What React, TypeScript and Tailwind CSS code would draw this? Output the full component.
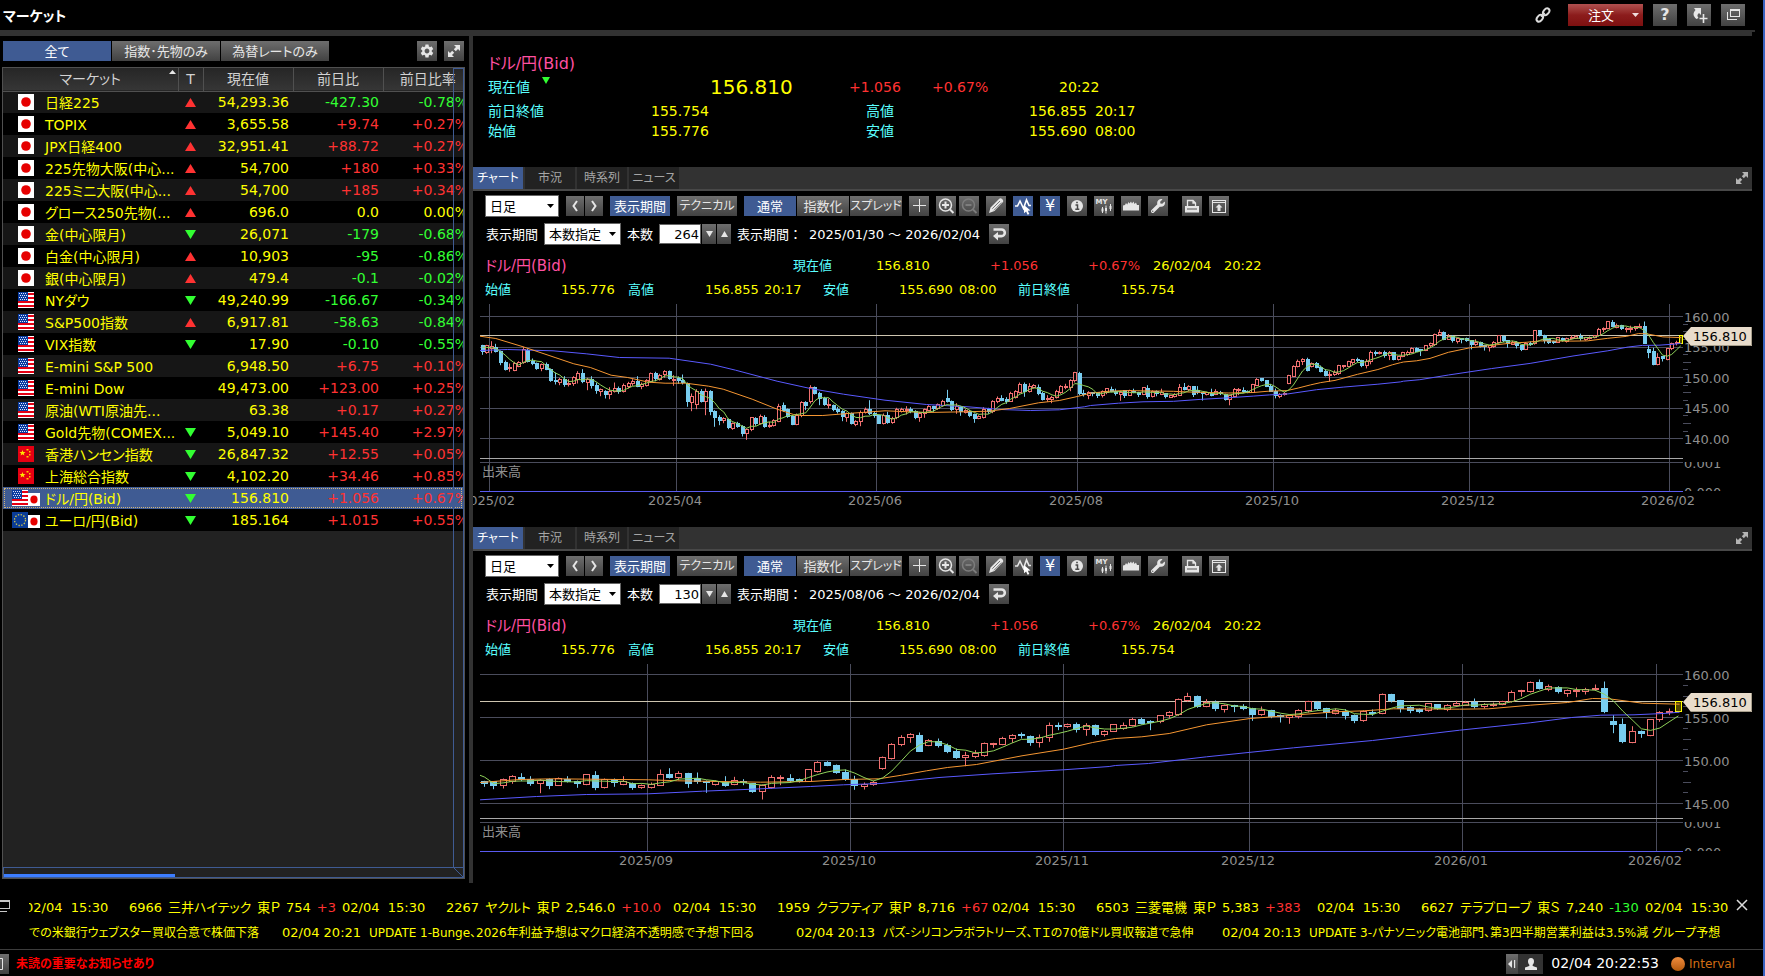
import React from "react";
import { FaWrench } from "react-icons/fa";
import { MdSettings } from "react-icons/md";

/* ---------- market list ---------- */

type Flag = "jp" | "us" | "cn" | "eu";
type Market = [Flag[], string, "u" | "d" | "", string, string, string];

const MARKETS: Market[] = [
  [["jp"], "日経225", "u", "54,293.36", "-427.30", "-0.78%"],
  [["jp"], "TOPIX", "u", "3,655.58", "+9.74", "+0.27%"],
  [["jp"], "JPX日経400", "u", "32,951.41", "+88.72", "+0.27%"],
  [["jp"], "225先物大阪(中心...", "u", "54,700", "+180", "+0.33%"],
  [["jp"], "225ミニ大阪(中心...", "u", "54,700", "+185", "+0.34%"],
  [["jp"], "グロース250先物(...", "u", "696.0", "0.0", "0.00%"],
  [["jp"], "金(中心限月)", "d", "26,071", "-179", "-0.68%"],
  [["jp"], "白金(中心限月)", "u", "10,903", "-95", "-0.86%"],
  [["jp"], "銀(中心限月)", "u", "479.4", "-0.1", "-0.02%"],
  [["us"], "NYダウ", "d", "49,240.99", "-166.67", "-0.34%"],
  [["us"], "S&P500指数", "u", "6,917.81", "-58.63", "-0.84%"],
  [["us"], "VIX指数", "d", "17.90", "-0.10", "-0.55%"],
  [["us"], "E-mini S&P 500", "", "6,948.50", "+6.75", "+0.10%"],
  [["us"], "E-mini Dow", "", "49,473.00", "+123.00", "+0.25%"],
  [["us"], "原油(WTI原油先...", "", "63.38", "+0.17", "+0.27%"],
  [["us"], "Gold先物(COMEX...", "d", "5,049.10", "+145.40", "+2.97%"],
  [["cn"], "香港ハンセン指数", "d", "26,847.32", "+12.55", "+0.05%"],
  [["cn"], "上海総合指数", "d", "4,102.20", "+34.46", "+0.85%"],
  [["us", "jp"], "ドル/円(Bid)", "d", "156.810", "+1.056", "+0.67%"],
  [["eu", "jp"], "ユーロ/円(Bid)", "d", "185.164", "+1.015", "+0.55%"],
];

const signColor = (v: string) =>
  v[0] === "+" ? "text-[#ff3232]" : v[0] === "-" ? "text-[#32ff32]" : "text-[#ffff00]";

function FlagIcon({ kind, small }: { kind: Flag; small?: boolean }) {
  const size = small ? "h-[13px] w-[12px] self-end" : "h-4 w-4";
  return (
    <svg className={`${size} shrink-0`} viewBox="0 0 16 16" preserveAspectRatio="none" aria-hidden="true">
      {kind === "jp" && (
        <>
          <rect width="16" height="16" fill="#fff" />
          <circle cx="8" cy="8" r="4.8" fill="#e60000" />
        </>
      )}
      {kind === "us" && (
        <>
          <rect width="16" height="16" fill="#fff" />
          {[1, 5, 9, 13].map((y) => (
            <rect key={y} y={y} width="16" height="2" fill="#e60014" />
          ))}
          <rect width="10" height="9" fill="#0a3ca0" />
          {[1, 3, 5, 7].map((y) =>
            [1, 3, 5, 7].map((x) => (
              <rect key={`${x}-${y}`} x={x + (y % 4 === 3 ? 1 : 0)} y={y} width="1" height="1" fill="#dce6ff" />
            ))
          )}
        </>
      )}
      {kind === "cn" && (
        <>
          <rect width="16" height="16" fill="#e60012" />
          <path d="M4.5 4l.8 2 2.2.1-1.700 1.300.6 2.100-1.900-1.200-1.900 1.200.6-2.100L1.500 6.100l2.200-.1z" fill="#ffe600" />
          <path d="M8.500 3h2v1.500h-2zM11 5h1.500v1.500H11zM11 8h1.500v1.500H11zM8.500 10h2v1.500h-2z" fill="#ffc800" />
        </>
      )}
      {kind === "eu" && (
        <>
          <rect width="16" height="16" fill="#0a3c96" />
          <circle cx="8" cy="8" r="5.500" fill="none" stroke="#d2c850" strokeWidth="1.300" strokeDasharray="1.400 1.480" />
        </>
      )}
    </svg>
  );
}

function Triangle({ dir }: { dir: "u" | "d" | "" }) {
  if (!dir) return null;
  return (
    <svg className="mx-auto h-[9px] w-[11px]" viewBox="0 0 11 9" aria-hidden="true">
      {dir === "u" ? <path d="M5.500 0L11 9H0z" fill="#ff3232" /> : <path d="M0 0h11L5.500 9z" fill="#32ff32" />}
    </svg>
  );
}

/* ---------- buttons ---------- */

const GRAY = "bg-gradient-to-b from-[#6e6e6e] to-[#424242] text-[#e6e6e6]";
const BLUE = "bg-[#3f5b93] text-white";

function Btn({
  label,
  on,
  className,
  children,
}: {
  label?: string;
  on?: boolean;
  className: string;
  children: React.ReactNode;
}) {
  return (
    <button
      type="button"
      aria-label={label}
      className={`flex shrink-0 items-center justify-center whitespace-nowrap leading-none ${on ? BLUE : GRAY} ${className}`}
    >
      {children}
    </button>
  );
}

function Expand({ className }: { className: string }) {
  return (
    <svg className={className} viewBox="0 0 12 12" fill="currentColor" aria-hidden="true">
      <path d="M6 0h6v6l-2-2-2.200 2.200-2-2L8 2zM6 12H0V6l2 2 2.200-2.200 2 2L4 10z" />
    </svg>
  );
}

function ToolIcon({ children }: { children: React.ReactNode }) {
  return (
    <svg className="h-5 w-5" viewBox="0 0 20 20" fill="none" stroke="currentColor" aria-hidden="true">
      {children}
    </svg>
  );
}

/* ---------- price data ---------- */

/* Each entry: direction, high, body top, body bottom, low, in steps below 160 yen. */
const EARLY = `B149 151 170 179,R149 152 172 176,R138 154 160 174,B146 156 168 172,B166 168 201 210,B196 201 222 226,R205 217 221 230,R200 205 225 228,R198 202 213 216,R155 163 203 206,B160 166 198 202,B190 198 206 210,B202 206 221 224,R205 209 221 228,B202 208 222 225,B220 222 255 260,B232 255 259 268,R248 252 262 270,B243 252 267 275,R252 264 268 274,R243 248 264 272,R228 234 252 265,B222 234 258 264,R248 252 262 285,B243 252 270 280,B262 270 285 296,R280 284 288 303,B285 290 298 310,R276 288 298 312,R262 280 290 292,B274 280 290 296,R265 272 290 292,R260 264 274 280,R252 260 264 272,B243 260 273 276,R262 268 274 282,R252 256 272 274,R232 236 258 262,B230 236 251 258,R236 240 252 256,R225 230 238 248,B226 230 251 254,R240 252 256 272,B244 250 257 266,B238 255 263 268,B262 265 320 335,R295 305 322 348,R282 288 328 342,B282 288 318 322,R280 290 318 360,B285 290 348 360,B345 348 368 395,B360 368 377 390,R366 370 376 384,B370 372 398 402,R382 386 400 404,B380 386 394 398,B390 394 415 424,R400 404 416 434,R366 368 404 408,B366 369 386 392,R358 363 386 388,B360 366 394 398,R380 390 394 398,R372 376 392 394,R326 334 378 381,B322 332 345 350,B340 343 363 368,B360 363 388 390,R355 360 388 390,R318 322 362 366,B318 322 332 345,R270 276 320 325,B274 278 295 298,B290 294 310 330,B305 310 328 332,R310 328 330 340,B328 330 342 348,B335 342 348 355,B345 348 364 378,R352 356 366 380,B352 356 386 388,R375 380 388 393,R346 352 380 393,R337 342 352 355,B315 342 354 360,B350 354 360 368,B358 362 384 386,R355 360 384 388,B350 360 383 386,R365 370 383 386,R338 342 368 372,R338 344 348 352,R333 342 346 358,B336 342 350 354,B345 348 368 372,R350 354 368 380,R340 344 356 368,R330 334 346 348,B332 334 340 350,R325 328 340 344,R314 320 330 335,B284 310 320 322,B316 320 342 348,R324 334 342 356,B332 336 348 362,R342 346 352 355,B344 350 360 366,B355 358 370 383,R360 364 370 372,R336 342 366 370,B338 342 350 356,R315 320 350 354,R304 310 320 324,B300 310 315 318,B306 314 318 326,R290 294 318 320,R285 290 306 310,R262 267 292 295,B262 268 290 305,R264 274 290 292,R267 270 276 280,B268 276 296 300,B290 296 312 316,R300 309 314 320,R302 308 314 324,R284 290 308 310,R270 274 292 296,R266 274 278 282,R252 256 276 288,R230 232 256 262,B230 234 296 300,B284 295 298 304,R288 292 302 312`;

const RECENT = `B377 378 384 395,B379 380 392 402,R370 374 392 400,R360 363 380 386,B354 366 374 378,B363 374 384 392,R372 377 386 414,B370 372 390 402,R367 370 390 392,B363 374 378 382,B376 378 386 398,R357 358 388 390,B348 361 396 405,R370 373 397 400,B370 374 383 395,R363 380 388 390,B382 384 396 404,R388 392 398 401,R382 388 396 400,R343 358 390 392,B339 359 366 370,R348 355 368 374,B353 354 386 398,B352 370 380 386,B376 379 383 413,R376 380 389 391,B363 382 390 395,R365 376 388 390,B372 378 382 390,B384 386 408 413,R388 391 409 433,R360 367 396 400,R360 368 370 390,B357 369 376 382,B370 374 380 382,R342 344 378 380,R318 322 348 352,B318 321 330 333,B328 330 352 356,B343 352 373 377,B362 373 392 404,R382 388 394 403,R377 382 389 392,R304 307 341 344,R264 268 310 313,R240 246 268 273,R234 238 248 263,B232 240 288 290,R252 257 270 273,B250 258 272 277,B265 272 290 294,B280 289 306 311,R290 301 306 333,R285 296 304 309,R262 266 300 305,R263 266 268 278,R245 250 268 270,R237 240 251 263,B232 239 242 250,B241 243 263 272,R238 247 263 277,R202 210 247 260,B202 210 212 225,R205 208 214 218,B202 208 222 232,R204 210 223 242,B208 210 239 243,R225 229 239 244,R207 209 228 230,R202 210 220 224,R188 193 212 214,B188 193 204 208,B195 199 202 225,R180 182 200 204,R168 172 182 190,R130 133 178 182,R113 124 136 140,B121 125 154 158,R132 141 154 156,B136 141 161 168,R148 151 163 172,B149 151 155 171,B147 153 160 165,B158 161 177 197,R154 166 178 182,B164 166 183 189,B178 181 184 202,R178 181 187 206,R162 166 184 190,R137 139 166 172,B138 141 161 166,B158 161 173 190,R160 166 175 178,B162 168 182 193,B178 181 196 204,R166 170 196 200,B163 172 175 182,R115 118 174 177,B116 118 137 142,B135 137 160 172,B153 157 167 174,B160 163 168 174,R144 146 167 170,B147 149 161 164,R147 151 163 168,R137 146 150 155,R137 141 150 152,B130 143 153 160,R144 147 155 160,R142 147 150 155,R137 140 148 150,R106 112 138 142,R104 107 110 124,R79 81 110 112,B73 82 99 103,R88 94 104 108,B93 96 110 115,R103 107 115 125,R97 107 109 126,R98 102 108 118,R88 100 104 107,B79 100 170 174,B180 198 209 234,B190 207 260 264,R213 230 262 264,B226 229 236 248,R192 194 240 243,R168 173 192 200,R160 168 171 180,R139 140 170 171`;

const earlyPrice = (s: number) => 160 - (s - 64) / 18.33;
const recentPrice = (s: number) => 160 - (s - 58) / 25.8;

interface Candle {
  up: boolean;
  high: number;
  top: number;
  bottom: number;
  low: number;
}

const parse = (src: string, price: (s: number) => number): Candle[] =>
  src.split(",").map((item) => {
    const [high, top, bottom, low] = item.slice(1).split(" ").map(Number).map(price);
    return { up: item[0] === "R", high, top, bottom, low };
  });

const CANDLES = [...parse(EARLY, earlyPrice), ...parse(RECENT, recentPrice)];
const CLOSES = CANDLES.map((c) => (c.up ? c.top : c.bottom));
const SMA5: [number, number][] = CLOSES.map((_, i) => {
  const part = [155.4, 155.3, 155, 155, ...CLOSES].slice(i, i + 5);
  return [i, part.reduce((a, b) => a + b, 0) / part.length];
});

const early = (pts: number[][]): [number, number][] => pts.map(([x, s]) => [(x - 29.5) / 10.98, earlyPrice(s)]);
const autumn = (pts: number[][]): [number, number][] => pts.map(([x, s]) => [134 + (x - 35) / 22.3, recentPrice(s)]);
const winter = (pts: number[][]): [number, number][] => pts.map(([x, s]) => [203 + (x - 19) / 22.3, recentPrice(s)]);

const SMA25 = [
  ...early([[24, 123], [62, 130], [128, 155], [205, 187], [250, 206], [290, 217], [340, 240], [380, 247], [430, 261], [470, 264], [520, 264], [575, 273], [610, 282], [680, 312], [740, 342], [780, 358], [800, 361], [850, 361], [920, 354], [1000, 347], [1100, 352], [1190, 350], [1250, 348], [1300, 340], [1370, 323], [1420, 316], [1460, 305]]),
  ...autumn([[24, 382], [120, 373], [200, 371], [430, 374], [500, 377], [700, 381], [820, 379], [900, 373], [985, 371], [1040, 360], [1100, 347], [1150, 337], [1220, 328], [1330, 302], [1430, 282], [1500, 262], [1540, 253]]),
  ...winter([[0, 250], [64, 245], [130, 235], [220, 209], [325, 190], [430, 180], [530, 170], [600, 167], [670, 161], [830, 162], [900, 161], [1000, 150], [1090, 142], [1150, 130], [1190, 131], [1270, 144], [1360, 147]]),
];
const SMA75 = [
  ...early([[24, 166], [90, 163], [200, 167], [280, 176], [360, 187], [480, 189], [580, 207], [640, 225], [740, 258], [820, 280], [900, 297], [1000, 315], [1100, 328], [1200, 335], [1280, 343], [1350, 346], [1420, 344], [1480, 335]]),
  ...autumn([[24, 434], [160, 424], [280, 418], [430, 416], [560, 408], [680, 402], [820, 394], [900, 389], [990, 385], [1130, 367], [1260, 356], [1430, 344], [1540, 334]]),
  ...winter([[0, 331], [80, 325], [220, 305], [430, 278], [620, 256], [830, 225], [1000, 203], [1100, 187], [1170, 180], [1250, 179], [1320, 175], [1360, 171]]),
];

interface ChartSpec {
  id: string;
  count: number;
  range: string;
  drawOn: boolean;
  top: number;
  perYen: number;
  floor: number;
  months: [number, string][];
}

const CHARTS: ChartSpec[] = [
  {
    id: "long",
    count: 264,
    range: "2025/01/30 ～ 2026/02/04",
    drawOn: true,
    top: 14.5,
    perYen: 6.11,
    floor: 140,
    months: [[16.5, "2025/02"], [203.5, "2025/04"], [403.5, "2025/06"], [604.5, "2025/08"], [800.5, "2025/10"], [996.5, "2025/12"], [1196.5, "2026/02"]],
  },
  {
    id: "short",
    count: 130,
    range: "2025/08/06 ～ 2026/02/04",
    drawOn: false,
    top: 12.5,
    perYen: 8.6,
    floor: 145,
    months: [[174.5, "2025/09"], [377.5, "2025/10"], [590.5, "2025/11"], [776.5, "2025/12"], [989.5, "2026/01"], [1183.5, "2026/02"]],
  },
];

const LEFT = 7;
const RIGHT = 1210;

function PriceChart({ spec }: { spec: ChartSpec }) {
  const step = (RIGHT - LEFT) / spec.count;
  const first = CANDLES.length - spec.count;
  const xOf = (i: number) => LEFT + (i - first + 0.5) * step;
  const yOf = (p: number) => spec.top + (160 - p) * spec.perYen;
  const mid = (n: number) => Math.floor(n) + 0.5;
  const half = spec.count > 200 ? 1.5 : 3;
  const line = (pts: [number, number][]) =>
    pts.map(([i, p]) => `${xOf(i).toFixed(1)},${yOf(p).toFixed(1)}`).join(" ");
  const levels: number[] = [];
  for (let p = 160; p >= spec.floor; p -= 5) levels.push(p);
  const ticks: number[] = [];
  for (let p = 158.75; p > spec.floor; p -= 1.25) if (p % 5 !== 0) ticks.push(p);
  const tagY = Math.round(yOf(156.81));

  return (
    <svg className="block h-auto w-full" viewBox="0 0 1279 221" role="img" aria-label="ドル/円 日足">
      <defs>
        <clipPath id={`plot-${spec.id}`}>
          <rect x={LEFT} y="0" width={RIGHT - LEFT} height="156" />
        </clipPath>
        <clipPath id={`vol-${spec.id}`}>
          <rect x="1210" y="160" width="69" height="29" />
        </clipPath>
      </defs>
      <g stroke="#4a4c5c" shapeRendering="crispEdges">
        {levels.map((p) => (
          <path key={p} d={`M${LEFT} ${mid(yOf(p))}H${RIGHT}`} />
        ))}
        {spec.months.map(([x]) => (
          <path key={x} d={`M${x} 2V189`} />
        ))}
        {ticks.map((p) => (
          <path key={p} d={`M${RIGHT} ${mid(yOf(p))}h${p % 2.5 === 0 ? 8 : 5}`} />
        ))}
        <path d={`M${LEFT} 160.500H${RIGHT}`} />
        <path d={`M${LEFT} 156.500H${RIGHT}`} stroke="#a8a8a8" />
        <path d={`M${LEFT} ${tagY - 0.5}H${RIGHT}`} stroke="#cdc5b0" />
      </g>
      <g clipPath={`url(#plot-${spec.id})`}>
        {CANDLES.slice(first).map((c, n) => {
          const x = mid(xOf(n + first));
          const last = n === spec.count - 1;
          const left = spec.count > 200 ? x - 2 + 0.5 : x - half;
          const top = mid(yOf(c.top));
          const bottom = Math.max(mid(yOf(c.bottom)), top + 1);
          const color = last ? "#ffff00" : c.up ? "#f07070" : "#78cdf0";
          const body = Math.floor(left) + 0.5;
          return (
            <g key={n} stroke={color} fill={c.up ? (last ? "#504600" : "#000") : color}>
              <path d={`M${x} ${yOf(c.high).toFixed(1)}V${top}M${x} ${bottom}V${yOf(c.low).toFixed(1)}`} />
              <rect x={body} y={top} width={half * 2} height={bottom - top} />
            </g>
          );
        })}
        <g fill="none" strokeWidth="1">
          <polyline points={line(SMA75)} stroke="#5a5aff" />
          <polyline points={line(SMA25)} stroke="#f59632" />
          <polyline points={line(SMA5)} stroke="#8fd25a" />
        </g>
      </g>
      <path d={`M${LEFT} 189.500H${RIGHT}`} stroke="#5a5af0" shapeRendering="crispEdges" />
      <g fill="#8f8f8f" fontSize="13">
        {levels.map((p) => (
          <text key={p} x="1211" y={Math.round(yOf(p)) + 5}>
            {p.toFixed(2)}
          </text>
        ))}
        {spec.months.map(([x, label]) => (
          <text key={x} x={Math.floor(x) - 1} y="203" textAnchor="middle">
            {label}
          </text>
        ))}
        <text x="9" y="174">出来高</text>
        <g clipPath={`url(#vol-${spec.id})`}>
          <text x="1211" y="166">0.001</text>
          <text x="1211" y="195">0.000</text>
        </g>
      </g>
      <path d={`M1210 ${tagY}l8-9h61v19h-61z`} fill="#e8dccb" />
      <path d={`M1218 ${tagY + 9.5}h60.500v-18.500`} fill="none" stroke="#a89f8c" />
      <text x="1220" y={tagY + 5} fontSize="13" fill="#000">
        156.810
      </text>
    </svg>
  );
}

/* ---------- chart panel ---------- */

function Dropdown({ label, value, className }: { label: string; value: string; className: string }) {
  return (
    <span className={`relative h-[22px] shrink-0 ${className}`}>
      <select
        aria-label={label}
        defaultValue={value}
        className="h-full w-full appearance-none rounded-none border border-[#666] bg-white pl-1 text-[13px] leading-none text-black"
      >
        <option>{value}</option>
      </select>
      <svg className="pointer-events-none absolute top-[9px] right-[5px] h-1 w-[7px]" viewBox="0 0 7 4" aria-hidden="true">
        <path d="M0 0h7L3.500 4z" fill="#000" />
      </svg>
    </span>
  );
}

const QUOTE_TOP = "grid h-6 items-center grid-cols-[308px_83px_114px_98px_65px_71px_auto]";
const QUOTE_BOTTOM = "grid h-6 items-center grid-cols-[76px_67px_77px_59px_59px_76px_60px_59px_103px_auto]";

function ChartPanel({ spec }: { spec: ChartSpec }) {
  return (
    <section>
      <div className="flex h-6 items-stretch gap-0.5 border-b-2 border-[#484848] bg-[#323232] text-[12px]">
        {["チャート", "市況", "時系列", "ニュース"].map((t, i) => (
          <button
            key={t}
            type="button"
            className={`w-[50px] whitespace-nowrap leading-none ${i === 0 ? BLUE : "bg-[#222] text-[#a5a5a5]"}`}
          >
            {t}
          </button>
        ))}
        <button type="button" aria-label="拡大" className="mr-1 ml-auto text-[#b4b4b4]">
          <Expand className="h-3 w-3" />
        </button>
      </div>

      <div className="flex items-center gap-[7px] pt-1 pl-3 text-[13px]">
        <Dropdown label="足種" value="日足" className="w-[74px]" />
        <div className="flex gap-px">
          <Btn label="前へ" className="h-5 w-[18px]">
            <svg className="h-3 w-2" viewBox="0 0 8 12" fill="none" stroke="currentColor" strokeWidth="2">
              <path d="M6 1L2.500 6 6 11" />
            </svg>
          </Btn>
          <Btn label="次へ" className="h-5 w-[18px]">
            <svg className="h-3 w-2" viewBox="0 0 8 12" fill="none" stroke="currentColor" strokeWidth="2">
              <path d="M2 1l3.500 5L2 11" />
            </svg>
          </Btn>
        </div>
        <Btn on className="h-5 w-[60px]">表示期間</Btn>
        <Btn className="h-5 w-[60px] text-[12px]">テクニカル</Btn>
        <div className="flex gap-px">
          <Btn on className="h-5 w-[52px]">通常</Btn>
          <Btn className="h-5 w-[52px]">指数化</Btn>
          <Btn className="h-5 w-[52px] text-[12px]">スプレッド</Btn>
        </div>
        <Btn label="十字線" className="h-5 w-5">
          <ToolIcon>
            <path d="M4 9.500h13M10.500 3v13" shapeRendering="crispEdges" />
          </ToolIcon>
        </Btn>
        <div className="flex gap-[3px]">
          <Btn label="拡大" className="h-5 w-5">
            <ToolIcon>
              <circle cx="9.500" cy="9" r="6" strokeWidth="1.500" />
              <path d="M6 9h7M9.500 5.500v7M14 13.500l3.500 3.500" strokeWidth="2" />
            </ToolIcon>
          </Btn>
          <Btn label="縮小" className="h-5 w-5">
            <span className="text-[#7d7d7d]">
              <ToolIcon>
                <circle cx="9.500" cy="9" r="6" strokeWidth="1.500" />
                <path d="M6.500 9h6M14 13.500l3.500 3.500" strokeWidth="1.800" />
              </ToolIcon>
            </span>
          </Btn>
        </div>
        <Btn label="描画" className="h-5 w-5">
          <ToolIcon>
            <path d="M3 17l1.500-5.500L13 3c1-1 2.200-.8 3.300.3s1.300 2.300.3 3.300L8.500 15z" fill="currentColor" stroke="none" />
            <path d="M6.300 12.700l7.700-7.700M8 14.300L15.700 6.600" stroke="#6a6a6a" strokeWidth=".9" />
          </ToolIcon>
        </Btn>
        <Btn label="選択" on={spec.drawOn} className="h-5 w-5">
          <ToolIcon>
            <path d="M2 10h2.500L7 5l3.500 7.500L13.500 4 16 9.500h2" strokeWidth="1.600" />
            <path d="M11 9l6.500 5.500-2.700.3 1.500 3.200-1.700.8-1.500-3.300-2.100 1.800z" fill="#fff" stroke="none" />
          </ToolIcon>
        </Btn>
        <Btn label="価格" on className="h-5 w-5 text-[16px]">¥</Btn>
        <Btn label="情報" className="h-5 w-5">
          <ToolIcon>
            <circle cx="10" cy="10" r="6" fill="currentColor" stroke="none" />
            <path d="M8.500 9h2v4M8.300 13.300h4M9.200 6.500h1.600" stroke="#484848" strokeWidth="1.500" />
          </ToolIcon>
        </Btn>
        <Btn label="マイチャート" className="h-5 w-5">
          <ToolIcon>
            <text x="1.500" y="8" fontSize="7" fontWeight="bold" fill="currentColor" stroke="none">MY</text>
            <path d="M8.500 11v6M12 9.500v8M16.500 8v7" />
            <path d="M7.500 12.500h2v3h-2zM11 12h2v3h-2zM15.500 10h2v3h-2z" fill="currentColor" stroke="none" />
          </ToolIcon>
        </Btn>
        <Btn label="出来高" className="h-5 w-5">
          <ToolIcon>
            <path d="M2 14.500V9.500L4 9l1-2 1.200 1.500L7.500 6l1 1.500L10 5.500l1 2 1.500-2 1 2.500L15 6.500 16 9h2v5.500z" fill="currentColor" stroke="none" />
          </ToolIcon>
        </Btn>
        <Btn label="設定" className="h-5 w-5">
          <FaWrench className="h-3.5 w-3.5" />
        </Btn>
        <Btn label="印刷" className="ml-[7px] h-5 w-5">
          <ToolIcon>
            <path d="M5.500 10V4.500H11L13.500 7v3M11 4.500V7h2.500" strokeWidth="1.300" />
            <path d="M3 10h14v6.500H3zM5 12.500v1h10v-1z" fill="currentColor" fillRule="evenodd" stroke="none" />
          </ToolIcon>
        </Btn>
        <Btn label="出力" className="h-5 w-5">
          <ToolIcon>
            <path d="M3.500 4.500h13v12h-13zM3.500 6.500h13" shapeRendering="crispEdges" />
            <path d="M10 8l3.500 3.500h-2V15h-3v-3.500h-2z" fill="currentColor" stroke="none" />
          </ToolIcon>
        </Btn>
      </div>

      <div className="flex items-center gap-1.5 pt-1.5 pl-[13px] text-[13px] whitespace-nowrap text-white">
        <span className="w-[52px] pt-0.5">表示期間</span>
        <Dropdown label="表示期間" value="本数指定" className="w-[77px]" />
        <label htmlFor={`bars-${spec.id}`} className="w-[26px] pt-0.5">本数</label>
        <div className="flex items-center gap-px">
          <input
            id={`bars-${spec.id}`}
            defaultValue={spec.count}
            className="h-5 w-[42px] border border-[#666] bg-white pr-px text-right text-[13px] text-black"
          />
          <Btn label="減らす" className="h-5 w-3.5">
            <svg className="h-1.5 w-[7px]" viewBox="0 0 7 6" fill="currentColor"><path d="M0 0h7L3.500 6z" /></svg>
          </Btn>
          <Btn label="増やす" className="h-5 w-3.5">
            <svg className="h-1.5 w-[7px]" viewBox="0 0 7 6" fill="currentColor"><path d="M3.500 0L7 6H0z" /></svg>
          </Btn>
        </div>
        <span className="w-[66px] pt-0.5 [font-feature-settings:normal]">表示期間：</span>
        <span className="w-[174px] pt-0.5">{spec.range}</span>
        <Btn label="戻す" className="h-5 w-5">
          <ToolIcon>
            <path d="M4.500 5.500h8a3.300 3.300 0 010 6.600H8" strokeWidth="2.600" />
            <path d="M9 8v8.500L4 12z" fill="currentColor" stroke="none" />
          </ToolIcon>
        </Btn>
      </div>

      <div className="mt-[9px] pl-3 text-[13px] whitespace-nowrap text-[#ffff00]">
        <div className={QUOTE_TOP}>
          <span className="text-[15px] text-[#ff50a0]">ドル/円(Bid)</span>
          <span className="text-[#5affff]">現在値</span>
          <span>156.810</span>
          <span className="text-[#ff3232]">+1.056</span>
          <span className="text-[#ff3232]">+0.67%</span>
          <span>26/02/04</span>
          <span>20:22</span>
        </div>
        <div className={QUOTE_BOTTOM}>
          <span className="text-[#5affff]">始値</span>
          <span>155.776</span>
          <span className="text-[#5affff]">高値</span>
          <span>156.855</span>
          <span>20:17</span>
          <span className="text-[#5affff]">安値</span>
          <span>155.690</span>
          <span>08:00</span>
          <span className="text-[#5affff]">前日終値</span>
          <span>155.754</span>
        </div>
      </div>
      <PriceChart spec={spec} />
    </section>
  );
}

/* ---------- ticker ---------- */

const TICKS: [string, string, string, string, string, string][] = [
  ["w-[317px]", "6966", "三井ハイテック", "東Ｐ", "754", "+3"],
  ["w-[331px]", "2267", "ヤクルト", "東Ｐ", "2,546.0", "+10.0"],
  ["w-[319px]", "1959", "クラフティア", "東Ｐ", "8,716", "+67"],
  ["w-[325px]", "6503", "三菱電機", "東Ｐ", "5,383", "+383"],
  ["w-[328px]", "6627", "テラプローブ", "東Ｓ", "7,240", "-130"],
];

const NEWS: [string, string, string][] = [
  ["w-[253px]", "", "での米銀行ウェブスター買収合意で株価下落"],
  ["w-[514px]", "02/04 20:21", "UPDATE 1-Bunge、2026年利益予想はマクロ経済不透明感で予想下回る"],
  ["w-[426px]", "02/04 20:13", "パズ-シリコンラボラトリーズ、ＴＩの70億ドル買収報道で急伸"],
  ["w-[560px]", "02/04 20:13", "UPDATE 3-パナソニック電池部門、第3四半期営業利益は3.5%減 グループ予想"],
];

export default function App() {
  return (
    <div className="flex min-h-screen flex-col overflow-hidden border-r-2 border-[#3a64c0] bg-black font-['DejaVu_Sans','Noto_Sans_CJK_JP',sans-serif] text-[13px] text-white [font-feature-settings:'palt']">
      <header className="flex h-[30px] items-center pr-[18px] pl-[3px]">
        <h1 className="pt-0.5 text-[14px] font-bold">マーケット</h1>
        <button type="button" aria-label="連動" className="mr-[17px] ml-auto text-[#dcdcdc]">
          <svg className="block h-4 w-4" viewBox="0 0 16 16" fill="none" stroke="currentColor" strokeWidth="2">
            <ellipse cx="4.800" cy="11.200" rx="3.800" ry="2.600" transform="rotate(-50 4.800 11.200)" />
            <ellipse cx="11.200" cy="4.800" rx="3.800" ry="2.600" transform="rotate(-50 11.200 4.800)" />
            <path d="M6 9.800l3.800-3.800" strokeWidth="1.500" />
          </svg>
        </button>
        <button
          type="button"
          className="flex h-[22px] w-[75px] items-center bg-gradient-to-b from-[#b05050] via-[#8c1c1c] to-[#7d1010] pr-1 pl-5 text-[13px] leading-none"
        >
          注文
          <svg className="ml-auto h-1 w-[7px]" viewBox="0 0 7 4" aria-hidden="true">
            <path d="M0 0h7L3.500 4z" fill="#f0dcdc" />
          </svg>
        </button>
        <div className="ml-2.5 flex gap-2.5">
          <Btn label="ヘルプ" className="h-[22px] w-6 text-[16px] font-bold">?</Btn>
          <Btn label="追加" className="h-[22px] w-6">
            <svg className="h-[22px] w-6" viewBox="0 0 24 22" fill="currentColor">
              <path d="M7 4h7v7l-2-2c-2 1.500-2 3-.5 5l-2 1C6 12 5.500 9.500 8.500 6z" />
              <path d="M16.500 10v9M12.500 14.500h8" stroke="currentColor" strokeWidth="1.600" />
            </svg>
          </Btn>
          <Btn label="ウィンドウ" className="h-[22px] w-6">
            <svg className="h-[22px] w-6" viewBox="0 0 24 22" fill="none" stroke="currentColor" shapeRendering="crispEdges">
              <path d="M9.500 5.500h9v7h-9zM9.500 6.500h9M6.500 8v7.500H16" />
            </svg>
          </Btn>
        </div>
      </header>
      <div className="mr-2 h-0.5 bg-[#323232]" />
      <div className="mr-[11px] h-1 bg-[#323232]" />

      <main className="flex">
        <aside className="flex w-[469px] shrink-0 flex-col pt-[5px] pr-1 pb-1 pl-0.5">
          <div className="flex h-5 items-stretch gap-px pl-px text-[13px]">
            <Btn on className="w-[108px]">全て</Btn>
            <Btn className="w-[108px]">指数･先物のみ</Btn>
            <Btn className="w-[108px]">為替レートのみ</Btn>
            <Btn label="設定" className="mr-1.5 ml-auto w-5">
              <MdSettings className="h-4 w-4" />
            </Btn>
            <Btn label="拡大" className="mr-px w-5">
              <Expand className="h-3 w-3" />
            </Btn>
          </div>

          <div className="relative mt-1.5 flex-1 overflow-hidden border border-[#505050] bg-[#222]">
            <table className="w-[469px] table-fixed border-collapse whitespace-nowrap">
              <colgroup>
                <col className="w-[175px]" />
                <col className="w-[25px]" />
                <col className="w-[90px]" />
                <col className="w-[90px]" />
                <col className="w-[89px]" />
              </colgroup>
              <thead>
                <tr className="h-[23px] border-b border-[#505050] bg-gradient-to-b from-[#262626] to-[#363636] text-[14px] leading-none text-[#d2d2d2]">
                  <th className="relative border-r border-[#505050] p-0 font-normal">
                    マーケット
                    <svg className="absolute top-0.5 right-0.5 h-1 w-[7px]" viewBox="0 0 7 4" aria-hidden="true">
                      <path d="M3.500 0L7 4H0z" fill="#e6e6e6" />
                    </svg>
                  </th>
                  <th className="border-r border-[#505050] p-0 font-normal">T</th>
                  <th className="border-r border-[#505050] p-0 font-normal">現在値</th>
                  <th className="border-r border-[#505050] p-0 font-normal">前日比</th>
                  <th className="p-0 font-normal">前日比率</th>
                </tr>
              </thead>
              <tbody className="text-[14px] leading-none text-[#ffff00]">
                {MARKETS.map(([flags, name, trend, price, diff, rate], i) => (
                  <tr
                    key={name}
                    className={`h-[22px] ${i === 18 ? "bg-[#3f5b93]" : i % 2 === 0 ? "bg-[#161616]" : "bg-black"}`}
                  >
                    <td className="p-0">
                      <div className="flex items-center">
                        <span className={`flex w-[42px] items-center ${flags.length > 1 ? "pl-[9px]" : "pl-[15px]"}`}>
                          {flags.map((f, n) => (
                            <FlagIcon key={f} kind={f} small={n === 1} />
                          ))}
                        </span>
                        <span className="pt-px">{name}</span>
                      </div>
                    </td>
                    <td className="p-0"><Triangle dir={trend} /></td>
                    <td className="py-0 pr-1 pl-0 text-right">{price}</td>
                    <td className={`py-0 pr-1 pl-0 text-right ${signColor(diff)}`}>{diff}</td>
                    <td className={`py-0 pr-1 pl-0 text-right ${signColor(rate)}`}>{rate}</td>
                  </tr>
                ))}
              </tbody>
            </table>
            <div className="pointer-events-none absolute top-[420px] right-0.5 left-px h-5 border border-dotted border-[#d2b478]" />
            <div className="pointer-events-none absolute top-0 right-0 bottom-2.5 w-[11px] border border-[#3f5b93]" />
            <div className="pointer-events-none absolute right-0 bottom-0 left-0 h-[11px] border border-[#3f5b93]">
              <div className="absolute bottom-0 left-0 h-[3px] w-[171px] bg-[#3c7dff]" />
              <svg className="absolute right-0 bottom-0 h-[10px] w-[10px]" viewBox="0 0 10 10" stroke="#3f5b93">
                <path d="M0 0l10 10" />
              </svg>
            </div>
          </div>
        </aside>

        <div className="w-1 shrink-0 bg-[#323232]" />

        <div className="mr-[11px] min-w-0 flex-1">
          <section className="h-[131px] pt-4 pl-[15px] text-[14px] whitespace-nowrap text-[#ffff00]">
            <div className="flex h-6 items-center text-[16px] text-[#ff50a0]">ドル/円(Bid)</div>
            <div className="grid h-[22px] grid-cols-[222px_139px_83px_127px_auto] items-center">
              <span className="flex gap-3 text-[#5affff]">
                現在値
                <svg className="h-[7px] w-2" viewBox="0 0 8 7" aria-hidden="true">
                  <path d="M0 0h8L4 7z" fill="#32ff32" />
                </svg>
              </span>
              <span className="text-[20px] leading-none">156.810</span>
              <span className="text-[#ff3232]">+1.056</span>
              <span className="text-[#ff3232]">+0.67%</span>
              <span>20:22</span>
            </div>
            <div className="mt-[3px] grid grid-cols-[163px_215px_163px_66px_auto] leading-5">
              <span className="text-[#5affff]">前日終値</span>
              <span>155.754</span>
              <span className="text-[#5affff]">高値</span>
              <span>156.855</span>
              <span>20:17</span>
              <span className="text-[#5affff]">始値</span>
              <span>155.776</span>
              <span className="text-[#5affff]">安値</span>
              <span>155.690</span>
              <span>08:00</span>
            </div>
          </section>
          <div className="flex flex-col gap-1">
            {CHARTS.map((spec) => (
              <ChartPanel key={spec.id} spec={spec} />
            ))}
          </div>
        </div>
      </main>

      <section className="flex pt-3 pb-1 whitespace-nowrap text-[#ffff00]">
        <button type="button" aria-label="ティッカー切替" className="mt-[5px] h-3 w-[29px] shrink-0 text-[#c8c8c8]">
          <svg className="block h-3 w-3" viewBox="0 0 12 12" fill="none" stroke="currentColor" shapeRendering="crispEdges">
            <path d="M0 1h9.500v7H0M0 11.500h7" />
            <path d="M0 1h10" strokeWidth="2" />
          </svg>
        </button>
        <div className="min-w-0 flex-1 overflow-hidden">
          <div className="-ml-1 flex h-[25px] items-center">
            {TICKS.map(([w, code, name, market, price, diff]) => (
              <div key={code} className={`flex shrink-0 gap-1.5 ${w}`}>
                <span className="w-[98px] whitespace-pre">{"02/04  15:30"}</span>
                <span>{code}</span>
                <span>{name}</span>
                <span>{market}</span>
                <span>{price}</span>
                <span className={signColor(diff)}>{diff}</span>
              </div>
            ))}
            <span className="whitespace-pre">{"02/04  15:30"}</span>
          </div>
          <div className="flex h-[25px] items-center">
            {NEWS.map(([w, time, text]) => (
              <div key={text} className={`flex shrink-0 items-baseline gap-2 ${w}`}>
                {time && <span>{time}</span>}
                <span className="text-[12px]">{text}</span>
              </div>
            ))}
          </div>
        </div>
        <button type="button" aria-label="閉じる" className="mt-1 mr-[15px] ml-2 h-3 w-3 shrink-0 text-[#dcdcdc]">
          <svg className="block h-3 w-3" viewBox="0 0 12 12" stroke="currentColor" strokeWidth="1.500">
            <path d="M1 1l10 10M11 1L1 11" />
          </svg>
        </button>
      </section>

      <footer className="flex h-[27px] items-center border-t border-[#3c3c3c] pt-px whitespace-nowrap">
        <Btn label="お知らせ" className="h-5 w-[9px]">
          <svg className="h-5 w-[9px]" viewBox="0 0 9 20" fill="none" stroke="currentColor">
            <path d="M0 4.500h2.500v11H0" />
          </svg>
        </Btn>
        <a href="#news" className="ml-[7px] text-[12px] font-bold text-[#ff0000]">未読の重要なお知らせあり</a>
        <Btn label="表示切替" className="ml-auto h-5 w-3">
          <svg className="h-2 w-2" viewBox="0 0 8 8" fill="currentColor">
            <path d="M4 0v8L0 4zM6 0h1.200v8H6z" />
          </svg>
        </Btn>
        <span className="flex h-5 w-[25px] items-center justify-center bg-[#323232]">
          <svg className="h-3 w-3" viewBox="0 0 12 12" fill="#e6e6e6" aria-hidden="true">
            <path d="M6 0a3 3.500 0 013 3.500C9 5.500 8 6.500 7.500 7c0 1 1 1.200 4.500 2.500V12H0V9.500C3.500 8.200 4.500 8 4.500 7 4 6.500 3 5.500 3 3.500A3 3.500 0 016 0z" />
          </svg>
        </span>
        <time className="ml-2 text-[14px]">02/04 20:22:53</time>
        <span className="mr-7 ml-3 flex items-center gap-1 text-[12px] text-[#d26e14]">
          <span className="h-3.5 w-3.5 rounded-full bg-gradient-to-b from-[#f08c3c] to-[#b45a0a]" />
          Interval
        </span>
      </footer>
    </div>
  );
}
